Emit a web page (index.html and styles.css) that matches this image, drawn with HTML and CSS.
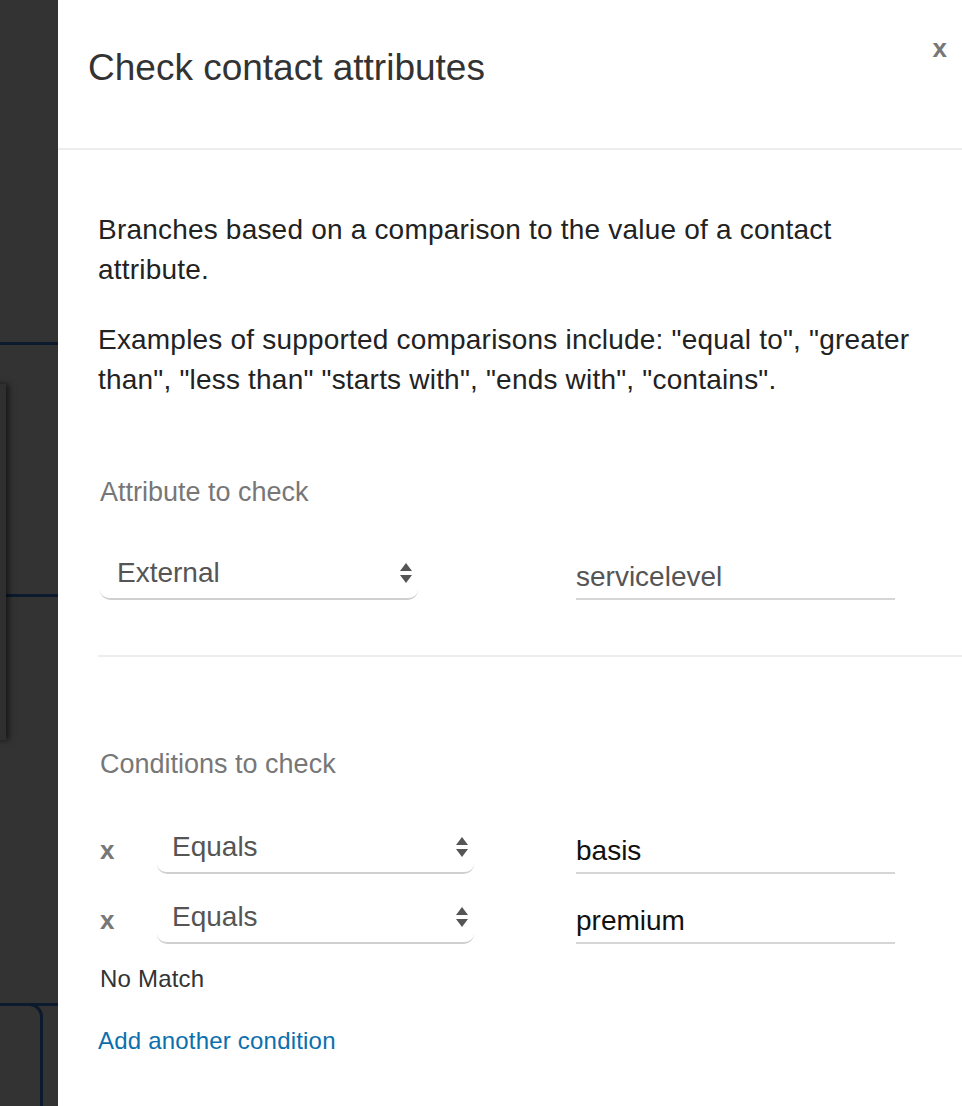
FILE: index.html
```html
<!DOCTYPE html>
<html lang="en">
<head>
<meta charset="utf-8">
<title>Check contact attributes</title>
<link rel="stylesheet" href="styles.css">
</head>
<body>
<div class="page">
  <div class="backdrop">
    <div class="flow-line line-a"></div>
    <div class="flow-line line-b"></div>
    <div class="flow-line line-c"></div>
    <div class="flow-card"></div>
    <div class="flow-corner"></div>
  </div>
  <div class="panel">
    <header class="panel-header">
      <h1 class="panel-title">Check contact attributes</h1>
      <span class="close">x</span>
    </header>
    <div class="panel-body">
      <p class="desc">Branches based on a comparison to the value of a contact attribute.</p>
      <p class="desc">Examples of supported comparisons include: "equal to", "greater than", "less than" "starts with", "ends with", "contains".</p>

      <div class="label attr-label">Attribute to check</div>
      <div class="attr-row">
        <div class="select">
          <span class="select-text">External</span>
          <span class="arrows"><span class="up"></span><span class="down"></span></span>
        </div>
        <div class="input muted">servicelevel</div>
      </div>

      <div class="divider"></div>

      <div class="label cond-label">Conditions to check</div>
      <div class="cond-list">
        <div class="cond-row">
          <span class="remove">x</span>
          <div class="select">
            <span class="select-text">Equals</span>
            <span class="arrows"><span class="up"></span><span class="down"></span></span>
          </div>
          <div class="input">basis</div>
        </div>
        <div class="cond-row">
          <span class="remove">x</span>
          <div class="select">
            <span class="select-text">Equals</span>
            <span class="arrows"><span class="up"></span><span class="down"></span></span>
          </div>
          <div class="input">premium</div>
        </div>
      </div>
      <div class="no-match">No Match</div>
      <a class="add-link" href="#">Add another condition</a>
    </div>
  </div>
</div>
</body>
</html>
```

FILE: styles.css
```css
* { box-sizing: border-box; }
html, body { margin: 0; padding: 0; }
body {
  font-family: "Liberation Sans", Arial, Helvetica, sans-serif;
  background: #fff;
}
.page {
  display: flex;
  width: 962px;
  height: 1106px;
  overflow: hidden;
}
.backdrop {
  position: relative;
  width: 58px;
  flex: 0 0 58px;
  background: #333333;
  overflow: hidden;
}
.flow-line {
  position: absolute;
  left: 0;
  right: 0;
  height: 3px;
  background: #0c1a2d;
}
.line-a { top: 342px; }
.line-b { top: 594px; }
.line-c { top: 1003px; }
.flow-card {
  position: absolute;
  left: -20px;
  top: 384px;
  width: 26px;
  height: 356px;
  background: #2f2f2f;
  box-shadow: 3px 0 6px rgba(0,0,0,0.55);
}
.flow-corner {
  position: absolute;
  left: -20px;
  top: 1003px;
  width: 63px;
  height: 200px;
  border-top: 3px solid #0c1a2d;
  border-right: 3px solid #0c1a2d;
  border-top-right-radius: 14px;
}
.panel {
  flex: 1;
  background: #fff;
  display: flex;
  flex-direction: column;
}
.panel-header {
  position: relative;
  height: 150px;
  border-bottom: 2px solid #ededed;
  padding: 46px 30px 0 30px;
}
.panel-title {
  margin: 0;
  font-weight: normal;
  font-size: 37px;
  line-height: 44px;
  color: #333;
}
.close {
  position: absolute;
  right: 15px;
  top: 33px;
  font-size: 26px;
  font-weight: bold;
  color: #777;
}
.panel-body {
  padding: 10px 30px 0 40px;
}
.desc {
  margin: 50px 0 0 0;
  font-size: 28px;
  line-height: 40px;
  color: #222;
  letter-spacing: 0.2px;
}
.desc + .desc { margin-top: 30px; }
.label {
  font-size: 27px;
  color: #777;
  padding-left: 2px;
}
.attr-label { margin-top: 72px; line-height: 40px; }
.attr-row {
  display: grid;
  grid-template-columns: 318px 319px;
  column-gap: 158px;
  margin-top: 40px;
  padding-left: 2px;
}
.select {
  display: flex;
  align-items: center;
  justify-content: space-between;
  height: 48px;
  padding: 0 6px 5px 15px;
  border-bottom: 2px solid #d0d0d0;
  border-radius: 0 0 10px 10px;
  font-size: 28px;
  color: #555;
}
.select-text { line-height: 32px; }
.attr-row .select { padding-left: 17px; }
.arrows {
  display: flex;
  flex-direction: column;
  gap: 4px;
  align-items: center;
}
.up, .down {
  width: 0; height: 0;
  border-left: 6px solid transparent;
  border-right: 6px solid transparent;
}
.up { border-bottom: 8px solid #555; }
.down { border-top: 8px solid #555; }
.input {
  align-self: end;
  height: 40px;
  font-size: 28px;
  line-height: 34px;
  color: #111;
  border-bottom: 2px solid #d6d6d6;
}
.input.muted { color: #555; height: 42px; line-height: 38px; }
.divider {
  height: 2px;
  background: #ededed;
  margin: 55px -40px 0 0;
}
.cond-label { margin-top: 87px; line-height: 40px; }
.cond-list {
  display: flex;
  flex-direction: column;
  gap: 22px;
  margin-top: 42px;
}
.cond-row {
  display: grid;
  grid-template-columns: 57px 317px 102px 319px;
  padding-left: 2px;
  align-items: end;
}
.cond-row .input { grid-column: 4; }
.remove {
  align-self: center;
  font-size: 26px;
  font-weight: bold;
  color: #777;
  padding-top: 0;
}
.no-match {
  margin-top: 20px;
  padding-left: 2px;
  font-size: 24px;
  line-height: 30px;
  color: #333;
  letter-spacing: 0.2px;
}
.add-link {
  display: block;
  margin-top: 32px;
  font-size: 24px;
  line-height: 30px;
  color: #0b6fae;
  text-decoration: none;
  letter-spacing: 0.2px;
}
```
